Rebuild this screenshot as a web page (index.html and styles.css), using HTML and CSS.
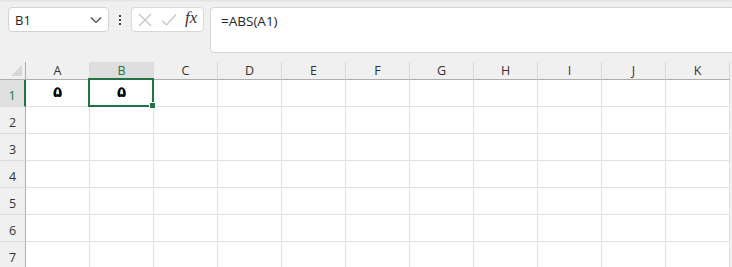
FILE: index.html
```
<!DOCTYPE html>
<html>
    <head>
        <meta charset="UTF-8" />
        <title>Sheet</title>
        <link rel="stylesheet" href="styles.css">
    </head>
    <body>
        <div class="topstrip"></div>
        <div class="fbar">
            <div class="namebox">
                <span>B1</span>
                <svg width="12" height="8" viewBox="0 0 12 8"><path d="M1 1.5 L6 6.5 L11 1.5" fill="none" stroke="#444" stroke-width="1.2"/></svg>
            </div>
            <div class="dots"><i></i><i></i><i></i></div>
            <div class="fbtns">
                <svg width="14" height="14" viewBox="0 0 14 14"><path d="M1 1 L13 13 M13 1 L1 13" stroke="#c4c4c4" stroke-width="1.2"/></svg>
                <svg width="16" height="14" viewBox="0 0 16 14"><path d="M1 7.5 L5.5 12 L15 1.5" fill="none" stroke="#c4c4c4" stroke-width="1.2"/></svg>
                <span class="fx">fx</span>
            </div>
            <div class="finput">=ABS(A1)</div>
        </div>
        <div class="sheet">
            <div class="corner"><div class="tri"></div></div>
            <div class="ch">A</div>
            <div class="ch sel">B</div>
            <div class="ch">C</div>
            <div class="ch">D</div>
            <div class="ch">E</div>
            <div class="ch">F</div>
            <div class="ch">G</div>
            <div class="ch">H</div>
            <div class="ch">I</div>
            <div class="ch">J</div>
            <div class="ch">K</div>

            <div class="rh sel">1</div>
            <div class="cell">۵</div>
            <div class="cell active">۵<div class="selbox"><div class="handle"></div></div></div>
            <div class="cell"></div><div class="cell"></div><div class="cell"></div><div class="cell"></div><div class="cell"></div><div class="cell"></div><div class="cell"></div><div class="cell"></div><div class="cell"></div>

            <div class="rh">2</div>
            <div class="cell"></div><div class="cell"></div><div class="cell"></div><div class="cell"></div><div class="cell"></div><div class="cell"></div><div class="cell"></div><div class="cell"></div><div class="cell"></div><div class="cell"></div><div class="cell"></div>
            <div class="rh">3</div>
            <div class="cell"></div><div class="cell"></div><div class="cell"></div><div class="cell"></div><div class="cell"></div><div class="cell"></div><div class="cell"></div><div class="cell"></div><div class="cell"></div><div class="cell"></div><div class="cell"></div>
            <div class="rh">4</div>
            <div class="cell"></div><div class="cell"></div><div class="cell"></div><div class="cell"></div><div class="cell"></div><div class="cell"></div><div class="cell"></div><div class="cell"></div><div class="cell"></div><div class="cell"></div><div class="cell"></div>
            <div class="rh">5</div>
            <div class="cell"></div><div class="cell"></div><div class="cell"></div><div class="cell"></div><div class="cell"></div><div class="cell"></div><div class="cell"></div><div class="cell"></div><div class="cell"></div><div class="cell"></div><div class="cell"></div>
            <div class="rh">6</div>
            <div class="cell"></div><div class="cell"></div><div class="cell"></div><div class="cell"></div><div class="cell"></div><div class="cell"></div><div class="cell"></div><div class="cell"></div><div class="cell"></div><div class="cell"></div><div class="cell"></div>
            <div class="rh">7</div>
            <div class="cell"></div><div class="cell"></div><div class="cell"></div><div class="cell"></div><div class="cell"></div><div class="cell"></div><div class="cell"></div><div class="cell"></div><div class="cell"></div><div class="cell"></div><div class="cell"></div>
        </div>
    </body>
</html>
```
FILE: styles.css
```
body{
    margin: 0;
    background-color: #f0f0f0;
    font-family: "Open Sans", "Noto Sans", sans-serif;
    color: #262626;
    overflow: hidden;
    width: 732px;
    height: 267px;
}
.topstrip{
    height: 2px;
    background: linear-gradient(#e2e2e2, #ebebeb);
}
.fbar{
    display: flex;
    align-items: flex-start;
    padding: 5px 0 0 8px;
    height: 60px;
    box-sizing: border-box;
}
.namebox{
    width: 101px;
    height: 25px;
    box-sizing: border-box;
    background: #fff;
    border: 1px solid #d4d4d4;
    border-radius: 4px;
    display: flex;
    align-items: center;
    justify-content: space-between;
    padding: 0 6px 0 6px;
    font-size: 13px;
}
.dots{
    width: 22px;
    height: 25px;
    display: flex;
    flex-direction: column;
    align-items: center;
    justify-content: center;
    gap: 2px;
}
.dots i{
    width: 2px;
    height: 2px;
    background: #444;
    display: block;
}
.fbtns{
    width: 73px;
    height: 25px;
    box-sizing: border-box;
    background: #fff;
    border: 1px solid #d9d9d9;
    border-radius: 4px;
    display: flex;
    align-items: center;
    gap: 9px;
    padding-left: 6px;
}
.fx{
    font-family: "Liberation Serif", serif;
    font-style: italic;
    font-size: 17px;
    color: #333;
    margin-left: -1px;
    margin-top: -3px;
}
.finput{
    flex: 1;
    margin-left: 6px;
    margin-right: -10px;
    height: 46px;
    box-sizing: border-box;
    background: #fff;
    border: 1px solid #d4d4d4;
    border-radius: 4px;
    font-size: 13.5px;
    padding: 4px 0 0 10px;
}
.sheet{
    display: grid;
    grid-template-columns: 26px repeat(11, 64px);
    grid-template-rows: 18px repeat(7, 27px);
}
.corner{
    position: relative;
    background: #f0f0f0;
    border-right: 1px solid #adadad;
    border-bottom: 1px solid #adadad;
}
.tri{
    position: absolute;
    right: 3px;
    bottom: 3px;
    width: 0;
    height: 0;
    border-left: 11px solid transparent;
    border-bottom: 11px solid #d6d6d6;
}
.ch{
    background: #f0f0f0;
    border-right: 1px solid #dadada;
    border-bottom: 1px solid #adadad;
    font-size: 12.5px;
    color: #333;
    display: flex;
    align-items: center;
    justify-content: center;
}
.ch.sel{
    background: #dedede;
    color: #217346;
    border-bottom: 2px solid #217346;
}
.rh{
    background: #f0f0f0;
    border-right: 1px solid #adadad;
    border-bottom: 1px solid #dcdcdc;
    font-size: 12.5px;
    color: #333;
    display: flex;
    align-items: center;
    justify-content: center;
    padding-top: 4px;
}
.rh.sel{
    background: #e0e0e0;
    color: #217346;
    border-right: 2px solid #217346;
}
.cell{
    background: #fff;
    border-right: 1px solid #e1e1e1;
    border-bottom: 1px solid #e1e1e1;
    font-family: "DejaVu Sans", sans-serif;
    font-weight: bold;
    font-size: 15px;
    color: #000;
    display: flex;
    align-items: center;
    justify-content: center;
    padding-bottom: 2px;
}
.cell.active{
    position: relative;
}
.selbox{
    position: absolute;
    top: -2px;
    left: -2px;
    right: -1px;
    bottom: -1px;
    border: 2px solid #217346;
}
.handle{
    position: absolute;
    right: -4px;
    bottom: -4px;
    width: 5px;
    height: 5px;
    background: #217346;
    border: 1px solid #fff;
}
```
